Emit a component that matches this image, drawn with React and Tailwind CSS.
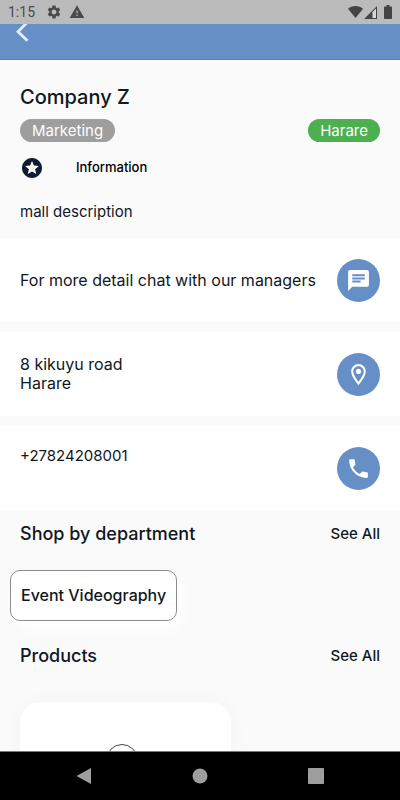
import { MdChat, MdSettings, MdStars, MdWarning } from "react-icons/md";

function PlaceIcon({ className }) {
  return (
    <svg className={className} viewBox="0 0 24 24" fill="currentColor" aria-hidden="true">
      <path d="M12 2C8.130 2 5 5.130 5 9c0 5.250 7 13 7 13s7-7.750 7-13c0-3.870-3.130-7-7-7zM7 9c0-2.760 2.240-5 5-5s5 2.240 5 5c0 2.880-2.880 7.190-5 9.880C9.920 16.210 7 11.850 7 9z" />
      <circle cx="12" cy="9" r="2.5" />
    </svg>
  );
}

function PhoneIcon({ className }) {
  return (
    <svg className={className} viewBox="0 0 24 24" fill="currentColor" aria-hidden="true">
      <path d="M6.620 10.790c1.440 2.830 3.760 5.140 6.590 6.590l2.200-2.200c.27-.27.67-.36 1.020-.24 1.120.37 2.330.57 3.570.57.55 0 1 .45 1 1V20c0 .55-.45 1-1 1-9.390 0-17-7.610-17-17 0-.55.45-1 1-1h3.500c.55 0 1 .45 1 1 0 1.250.2 2.450.57 3.570.11.35.03.74-.25 1.020l-2.200 2.200z" />
    </svg>
  );
}

function StatusBar() {
  return (
    <div className="flex h-6 shrink-0 items-center justify-between bg-[#bbbbbb] px-2 font-[Roboto,sans-serif] text-[#4a4a4a]">
      <div className="flex items-center">
        <span className="text-sm">1:15</span>
        <MdSettings className="ml-[11px] size-4" />
        <MdWarning className="ml-[7px] size-4" />
      </div>
      <div className="flex items-center text-[#444444]">
        <svg className="h-3 w-[15px]" viewBox="0 0 15 12" fill="currentColor" aria-hidden="true">
          <path d="M7.500 12L0 2.800C2 1 4.600 0 7.500 0S13 1 15 2.800z" />
        </svg>
        <svg className="ml-px h-[13px] w-[13px]" viewBox="0 0 13 13" aria-hidden="true">
          <path fill="#d8d8d8" d="M8 5l4-4v11H8z" />
          <path fill="currentColor" fillRule="evenodd" d="M13 0v13H0zM12 2.400L8.500 5.900V12H12z" />
        </svg>
        <svg className="ml-[7px] h-3.5 w-2" viewBox="0 0 8 14" fill="currentColor" aria-hidden="true">
          <path d="M2.500 0h3v1.500H7.200c.5 0 .8.300.8.800v10.900c0 .5-.3.800-.8.800H.8c-.5 0-.8-.3-.8-.8V2.300c0-.5.300-.8.800-.8h1.700z" />
        </svg>
      </div>
    </div>
  );
}

function ContactRow({ icon: Icon, label, top, children }) {
  return (
    <div className={`flex h-[84px] justify-between bg-white px-5 ${top ? "items-start" : "items-center"}`}>
      <p className={`whitespace-nowrap ${top ? "pt-5 text-[15px]/5" : "text-base/[19px]"}`}>{children}</p>
      <button
        type="button"
        aria-label={label}
        className="flex size-[43px] shrink-0 items-center justify-center self-center rounded-full bg-[#658fc6] text-white"
      >
        <Icon className="size-[25px]" />
      </button>
    </div>
  );
}

function SectionTitle({ title }) {
  return (
    <div className="flex h-12 items-center justify-between px-5 font-medium">
      <h2 className="text-lg">{title}</h2>
      <a href="#" className="text-[15px]">See All</a>
    </div>
  );
}

export default function App() {
  return (
    <div className="flex h-screen flex-col overflow-hidden bg-[#fafafa] font-[Inter,sans-serif] text-[#101722]">
      <StatusBar />
      <header className="flex h-9 shrink-0 items-start border-b border-[#5580b8] bg-[#658fc6] px-4">
        <button type="button" aria-label="Back" className="text-[#e0efff]">
          <svg className="block h-[18px] w-3.5" viewBox="0 0 14 18" fill="none" stroke="currentColor" strokeWidth="2.8">
            <path d="M11.500 -2L2 7.700l9.500 9" />
          </svg>
        </button>
      </header>

      <main className="min-h-0 flex-1 overflow-hidden">
        <section className="px-5 pb-3.5 pt-[23px]">
          <h1 className="text-xl/7 font-medium">Company Z</h1>
          <div className="mt-2 flex justify-between text-[15px]/[23px] text-white">
            <span className="rounded-full bg-[#9e9e9e] px-3">Marketing</span>
            <span className="rounded-full bg-[#4caf50] px-3">Harare</span>
          </div>
          <div className="mt-3.5 flex h-6 items-center">
            <MdStars className="size-6 text-[#0d1c2e]" />
            <span className="ml-8 text-[13px] font-medium text-black">Information</span>
          </div>
          <p className="mt-5 text-[15px]/6">mall description</p>
        </section>

        <div className="flex flex-col gap-2.5">
          <ContactRow icon={MdChat} label="Chat">For more detail chat with our managers</ContactRow>
          <ContactRow icon={PlaceIcon} label="Show on map">8 kikuyu road<br />Harare</ContactRow>
          <ContactRow icon={PhoneIcon} label="Call" top>+27824208001</ContactRow>
        </div>

        <SectionTitle title="Shop by department" />
        <div className="flex px-2.5 pb-[11px] pt-3">
          <button
            type="button"
            className="h-[51px] whitespace-nowrap rounded-[10px] border border-[#8c8c8c] bg-white px-2.5 pb-0.5 text-base font-medium shadow-[6px_8px_16px_#ffffff]"
          >
            Event Videography
          </button>
        </div>

        <SectionTitle title="Products" />
        <div className="px-5 pt-[22px]">
          <div className="flex h-64 w-[211px] justify-center rounded-[20px] bg-white pr-2 pt-[42px] shadow-[0_0_20px_rgba(0,0,0,0.03)]">
            <svg className="size-8" viewBox="0 0 32 32" fill="none" stroke="#444444" aria-hidden="true">
              <circle cx="16" cy="16" r="15.5" />
            </svg>
          </div>
        </div>
      </main>

      <nav className="flex h-[49px] shrink-0 items-center justify-around border-t border-[#777777] bg-black px-[26px] text-[#9e9e9e]">
        <button type="button" aria-label="Back">
          <svg className="size-4" viewBox="0 0 16 16" fill="currentColor">
            <path d="M15 0v16L0.500 8z" />
          </svg>
        </button>
        <button type="button" aria-label="Home">
          <svg className="size-4" viewBox="0 0 16 16" fill="currentColor">
            <circle cx="8" cy="8" r="7.5" />
          </svg>
        </button>
        <button type="button" aria-label="Recent apps">
          <svg className="size-4" viewBox="0 0 16 16" fill="currentColor">
            <rect width="16" height="16" rx="1" />
          </svg>
        </button>
      </nav>
    </div>
  );
}
